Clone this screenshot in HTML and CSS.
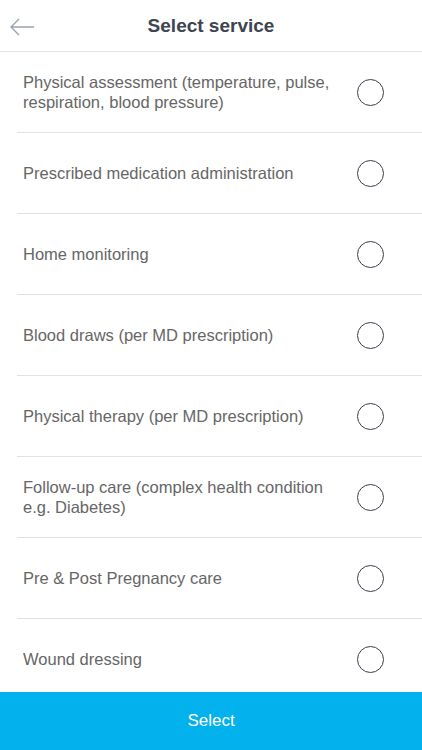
FILE: index.html
```html
<!DOCTYPE html>
<html>
  <head>
    <title>Select service</title>
    <link rel="stylesheet" href="styles.css">
  </head>
  <body>
    <div class="screen">
      <div class="top-bar">
        <div class="back-arrow">
          <svg width="26" height="18" viewBox="0 0 26 18">
            <path d="M25 9 H2 M10 1 L2 9 L10 17" fill="none" stroke="#9aa3b0" stroke-width="1.4"/>
          </svg>
        </div>
        <div class="top-title">Select service</div>
      </div>
      <div class="service-list">
        <div class="service-row">
          <div class="service-name">Physical assessment (temperature, pulse, respiration, blood pressure)</div>
          <div class="radio-circle"></div>
        </div>
        <div class="service-row">
          <div class="service-name">Prescribed medication administration</div>
          <div class="radio-circle"></div>
        </div>
        <div class="service-row">
          <div class="service-name">Home monitoring</div>
          <div class="radio-circle"></div>
        </div>
        <div class="service-row">
          <div class="service-name">Blood draws (per MD prescription)</div>
          <div class="radio-circle"></div>
        </div>
        <div class="service-row">
          <div class="service-name">Physical therapy (per MD prescription)</div>
          <div class="radio-circle"></div>
        </div>
        <div class="service-row">
          <div class="service-name">Follow-up care (complex health condition e.g. Diabetes)</div>
          <div class="radio-circle"></div>
        </div>
        <div class="service-row">
          <div class="service-name">Pre &amp; Post Pregnancy care</div>
          <div class="radio-circle"></div>
        </div>
        <div class="service-row">
          <div class="service-name">Wound dressing</div>
          <div class="radio-circle"></div>
        </div>
      </div>
      <div class="select-button">Select</div>
    </div>
  </body>
</html>
```

FILE: styles.css
```css
body {
  margin: 0;
  background-color: #ffffff;
  font-family: "Liberation Sans", Arial, Helvetica, sans-serif;
}

.screen {
  display: flex;
  flex-direction: column;
  width: 422px;
  height: 750px;
  overflow: hidden;
}

.top-bar {
  display: flex;
  align-items: center;
  justify-content: center;
  position: relative;
  height: 51px;
  border-bottom: 1px solid #e3e5e8;
  flex-shrink: 0;
}

.back-arrow {
  position: absolute;
  left: 9px;
  top: 18px;
  height: 18px;
}

.top-title {
  font-size: 19px;
  font-weight: bold;
  color: #3e4450;
  margin-top: 1px;
}

.service-list {
  flex: 1;
  overflow: hidden;
}

.service-row {
  display: flex;
  align-items: center;
  justify-content: space-between;
  height: 80px;
  margin-left: 17px;
  padding-left: 6px;
  padding-right: 38px;
  border-bottom: 1px solid #e0e2e5;
}

.service-row:last-child {
  border-bottom: none;
}

.service-name {
  font-size: 16.5px;
  line-height: 20px;
  color: #666666;
  max-width: 310px;
}

.radio-circle {
  width: 25px;
  height: 25px;
  border: 1.7px solid #3a404b;
  border-radius: 50%;
  flex-shrink: 0;
}

.select-button {
  display: flex;
  align-items: center;
  justify-content: center;
  height: 58px;
  flex-shrink: 0;
  background-color: #03b1ec;
  color: #ffffff;
  font-size: 17px;
}
```
